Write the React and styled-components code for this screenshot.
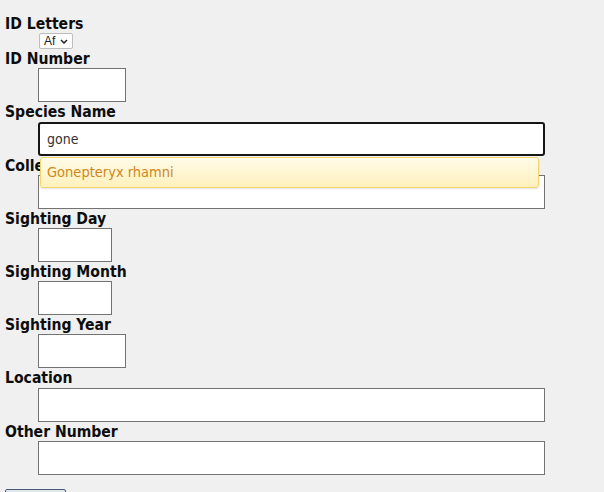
import React from "react";
import styled, { createGlobalStyle } from "styled-components";

const GlobalStyle = createGlobalStyle`
  html, body {
    margin: 0;
    padding: 0;
    background: #f0f0f0;
    font-family: "DejaVu Sans Condensed", "DejaVu Sans", Verdana, sans-serif;
  }
`;

const Form = styled.form`
  display: flex;
  flex-direction: column;
  align-items: flex-start;
  padding: 14px 0 0 5px;
`;

const Label = styled.label`
  display: block;
  padding-top: 2px;
  font: 700 15.6px/17.2px "DejaVu Sans Condensed", "DejaVu Sans", Verdana, sans-serif;
  color: #0d0d0d;
  white-space: nowrap;
`;

const Control = styled.div`
  position: relative;
  display: flex;
  padding-left: ${(p) => p.$indent || 33}px;
`;

const Input = styled.input`
  display: block;
  box-sizing: border-box;
  width: ${(p) => p.$w}px;
  height: 34px;
  margin: 0;
  padding: 0 ${(p) => (p.$focused ? 7 : 8)}px;
  background: #fff;
  border: ${(p) => (p.$focused ? "2px solid #161616" : "1px solid #737373")};
  border-radius: ${(p) => (p.$focused ? "3px" : "0")};
  font: 14px "DejaVu Sans Condensed", "DejaVu Sans", Verdana, sans-serif;
  color: #333;
  outline: none;
`;

const SelectWrap = styled.div`
  position: relative;
  display: flex;
  width: 34px;
  height: 16px;
`;

const Select = styled.select`
  appearance: none;
  box-sizing: border-box;
  width: 100%;
  height: 100%;
  margin: 0;
  padding: 0 14px 0 4px;
  background: #fff;
  border: 1px solid #bdbdbd;
  border-radius: 2px;
  font: 12px/14px "Liberation Sans", Arial, sans-serif;
  color: #222;
`;

const Chevron = styled.svg`
  position: absolute;
  right: 5px;
  top: 6px;
  width: 8px;
  height: 5px;
  pointer-events: none;
`;

const Suggestions = styled.ul`
  position: absolute;
  z-index: 2;
  top: calc(100% + 1px);
  left: 35px;
  right: 6px;
  margin: 0;
  padding: 0;
  list-style: none;
  box-sizing: border-box;
  height: 31px;
  border: 1px solid #f3d56f;
  border-radius: 3px;
  background: linear-gradient(#fffbe8, #fff1bd);
  box-shadow: 0 1px 2px rgba(0, 0, 0, 0.12);
`;

const Suggestion = styled.li`
  padding: 0 0 0 6px;
  font: 14.5px/29px "DejaVu Sans Condensed", "DejaVu Sans", Verdana, sans-serif;
  color: #d0861a;
`;

const Submit = styled.button`
  margin: 14px 0 0 0;
  width: 61px;
  height: 26px;
  box-sizing: border-box;
  border: 1px solid #4b5a78;
  border-radius: 2px;
  background: linear-gradient(#dfe7f3, #c6d3e6);
  font: 13px "DejaVu Sans Condensed", "DejaVu Sans", sans-serif;
`;

const fields = [
  { label: "ID Number", w: 88 },
  { label: "Species Name", w: 507, focused: true, value: "gone" },
  { label: "Collector", w: 507 },
  { label: "Sighting Day", w: 74 },
  { label: "Sighting Month", w: 74 },
  { label: "Sighting Year", w: 88 },
  { label: "Location", w: 507 },
  { label: "Other Number", w: 507 },
];

export default function App() {
  return (
    <>
      <GlobalStyle />
      <Form onSubmit={(e) => e.preventDefault()}>
        <Label>ID Letters</Label>
        <Control $indent={34}>
          <SelectWrap>
            <Select defaultValue="Af">
              <option>Af</option>
            </Select>
            <Chevron viewBox="0 0 8 5">
              <path d="M1 1 L4 4 L7 1" fill="none" stroke="#222" strokeWidth="1.5" />
            </Chevron>
          </SelectWrap>
        </Control>
        {fields.map((f) => (
          <React.Fragment key={f.label}>
            <Label>{f.label}</Label>
            <Control>
              <Input
                $w={f.w}
                $focused={f.focused}
                defaultValue={f.value || ""}
              />
              {f.focused && (
                <Suggestions>
                  <Suggestion>Gonepteryx rhamni</Suggestion>
                </Suggestions>
              )}
            </Control>
          </React.Fragment>
        ))}
        <Submit type="submit">Submit</Submit>
      </Form>
    </>
  );
}
